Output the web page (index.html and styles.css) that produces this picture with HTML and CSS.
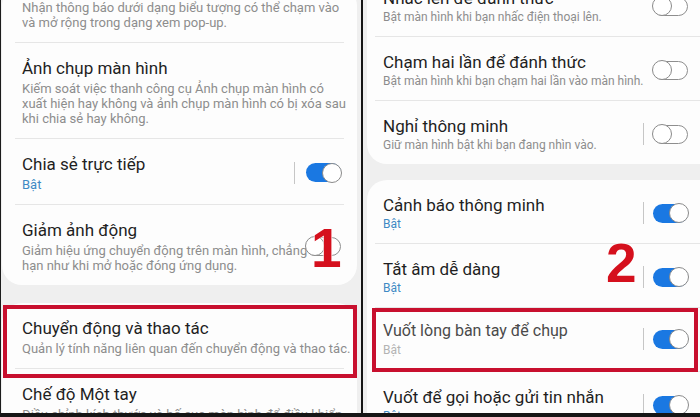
FILE: index.html
```html
<!DOCTYPE html>
<html lang="vi">
<head>
<meta charset="utf-8">
<title>Cài đặt</title>
<link rel="stylesheet" href="styles.css">
</head>
<body>
<div class="frame">
  <section class="panel panel-left">
    <div class="card card-first">
      <div class="item">
        <div class="text">
          <p class="sub first-sub">Nhận thông báo dưới dạng biểu tượng có thể chạm vào<br>và mở rộng trong dạng xem pop-up.</p>
        </div>
      </div>
      <hr class="rule">
      <div class="item">
        <div class="text">
          <p class="title">Ảnh chụp màn hình</p>
          <p class="sub">Kiếm soát việc thanh công cụ Ảnh chụp màn hình có<br>xuất hiện hay không và ảnh chụp màn hình có bị xóa sau<br>khi chia sẻ hay không.</p>
        </div>
      </div>
      <hr class="rule">
      <div class="item">
        <div class="text">
          <p class="title">Chia sẻ trực tiếp</p>
          <p class="sub state">Bật</p>
        </div>
        <div class="ctrl"><span class="bar"></span><span class="toggle on"><span class="knob"></span></span></div>
      </div>
      <hr class="rule">
      <div class="item">
        <div class="text">
          <p class="title">Giảm ảnh động</p>
          <p class="sub">Giảm hiệu ứng chuyển động trên màn hình, chẳng<br>hạn như khi mở hoặc đóng ứng dụng.</p>
        </div>
        <div class="ctrl"><span class="toggle off"><span class="knob"></span></span></div>
      </div>
    </div>
    <div class="card card-second">
      <div class="item boxed">
        <div class="text">
          <p class="title">Chuyển động và thao tác</p>
          <p class="sub">Quản lý tính năng liên quan đến chuyển động và thao tác.</p>
        </div>
        <span class="redbox redbox-left"></span>
      </div>
      <hr class="rule">
      <div class="item">
        <div class="text">
          <p class="title">Chế độ Một tay</p>
          <p class="sub">Điều chỉnh kích thước và bố cục màn hình để điều khiển</p>
        </div>
      </div>
    </div>
    <span class="step step-1">1</span>
  </section>

  <div class="split"></div>

  <section class="panel panel-right">
    <div class="card card-first">
      <div class="item">
        <div class="text">
          <p class="title">Nhấc lên để đánh thức</p>
          <p class="sub">Bật màn hình khi bạn nhấc điện thoại lên.</p>
        </div>
        <div class="ctrl"><span class="toggle off"><span class="knob"></span></span></div>
      </div>
      <hr class="rule">
      <div class="item">
        <div class="text">
          <p class="title">Chạm hai lần để đánh thức</p>
          <p class="sub">Bật màn hình khi bạn chạm hai lần vào màn hình.</p>
        </div>
        <div class="ctrl"><span class="toggle off"><span class="knob"></span></span></div>
      </div>
      <hr class="rule">
      <div class="item">
        <div class="text">
          <p class="title">Nghỉ thông minh</p>
          <p class="sub">Giữ màn hình bật khi bạn đang nhìn vào.</p>
        </div>
        <div class="ctrl"><span class="bar"></span><span class="toggle off"><span class="knob"></span></span></div>
      </div>
    </div>
    <div class="card card-second">
      <div class="item">
        <div class="text">
          <p class="title">Cảnh báo thông minh</p>
          <p class="sub state">Bật</p>
        </div>
        <div class="ctrl"><span class="bar"></span><span class="toggle on"><span class="knob"></span></span></div>
      </div>
      <hr class="rule">
      <div class="item">
        <div class="text">
          <p class="title">Tắt âm dễ dàng</p>
          <p class="sub state">Bật</p>
        </div>
        <div class="ctrl"><span class="bar"></span><span class="toggle on"><span class="knob"></span></span></div>
      </div>
      <hr class="rule">
      <div class="item boxed">
        <div class="text">
          <p class="title title-faded">Vuốt lòng bàn tay để chụp</p>
          <p class="sub state-faded">Bật</p>
        </div>
        <div class="ctrl"><span class="bar"></span><span class="toggle on"><span class="knob"></span></span></div>
        <span class="redbox redbox-right"></span>
      </div>
      <hr class="rule">
      <div class="item">
        <div class="text">
          <p class="title">Vuốt để gọi hoặc gửi tin nhắn</p>
          <p class="sub state">Bật</p>
        </div>
        <div class="ctrl"><span class="bar"></span><span class="toggle on"><span class="knob"></span></span></div>
      </div>
    </div>
    <span class="step step-2">2</span>
  </section>
</div>
</body>
</html>
```

FILE: styles.css
```css
* { box-sizing: border-box; }

html, body {
  margin: 0;
  padding: 0;
}

body {
  width: 700px;
  height: 417px;
  overflow: hidden;
  background: #151515;
  font-family: Roboto, "Noto Sans", "Liberation Sans", sans-serif;
}

.frame {
  display: flex;
  width: 700px;
  height: 417px;
  border-left: 1px solid #1c1c1c;
  border-bottom: 4px solid #161616;
  overflow: hidden;
}

.panel {
  position: relative;
  display: flex;
  flex-direction: column;
  background: #efefef;
  overflow: hidden;
}

.panel-left {
  width: 360px;
  flex: none;
  padding: 0 4px 0 1px;
}

.split {
  width: 2px;
  flex: none;
  background: #151515;
}

.panel-right {
  flex: 1;
  padding-left: 4px;
}

.card {
  flex: none;
  background: #fdfdfd;
  border-radius: 20px;
}

.panel-left .card-first { margin-top: -14px; }
.panel-left .card-second { margin-top: 18px; }

.panel-right .card { margin-right: -20px; }
.panel-right .card-first { margin-top: -27px; }
.panel-right .card-second { margin-top: 16px; }

.item {
  position: relative;
  display: flex;
  align-items: center;
}

.panel-left .item { padding: 14px 16px 12px 20px; }
.panel-right .item { padding: 14px 32px 11px 16px; }
.panel-right .item.boxed { padding: 12px 32px 13px 16px; }

.text {
  flex: 1;
  min-width: 0;
}

.title {
  margin: 0;
  font-size: 17px;
  line-height: 22px;
  color: #1f1f1f;
  white-space: nowrap;
}

.sub {
  margin: 2px 0 0;
  font-size: 13px;
  line-height: 15px;
  color: #8d8d8d;
  white-space: nowrap;
}

.first-sub { margin-top: 0; }

.panel-right .sub {
  margin-top: 0;
  font-size: 12px;
  line-height: 16px;
}

.state { color: #3e8ac4; }

.title-faded {
  font-size: 16px;
  color: #4a4a4a;
}

.state-faded { color: #b3b3b3; }

.rule {
  margin: 0 13px;
  border: 0;
  height: 1px;
  background: #e6e6e6;
}

.panel-right .rule { margin: 0 0 0 8px; }

.ctrl {
  display: flex;
  align-items: center;
  gap: 11px;
}

.panel-right .ctrl { gap: 9px; }

.bar {
  width: 1px;
  height: 22px;
  background: #c6c6c6;
}

.toggle {
  display: flex;
  align-items: center;
  width: 35px;
  height: 19px;
  border-radius: 10px;
}

.toggle .knob {
  width: 20px;
  height: 20px;
  border-radius: 50%;
  background: #fff;
  border: 1.5px solid #8a8a8a;
  flex: none;
}

.toggle.on {
  justify-content: flex-end;
  background: #1a78e2;
}

.toggle.on .knob { margin-right: -1px; }

.toggle.off {
  background: #fff;
  border: 1.5px solid #8e8e8e;
}

.toggle.off .knob { margin-left: -2px; }

.redbox {
  position: absolute;
  border: 4px solid #c8102e;
  pointer-events: none;
}

.redbox-left {
  left: 1px;
  right: 0;
  top: 2px;
  bottom: -10px;
}

.redbox-right {
  left: 5px;
  right: 22px;
  top: 0;
  bottom: -1px;
}

.step {
  position: absolute;
  font-family: "Liberation Sans", Arial, sans-serif;
  font-weight: 700;
  font-size: 55px;
  line-height: 55px;
  color: #d5101d;
  text-shadow: 0 0 2px #fff, 0 0 2px #fff, 0 0 1px #fff;
}

.step-1 {
  left: 310px;
  top: 221px;
}

.step-2 {
  left: 243px;
  top: 236px;
}
```
